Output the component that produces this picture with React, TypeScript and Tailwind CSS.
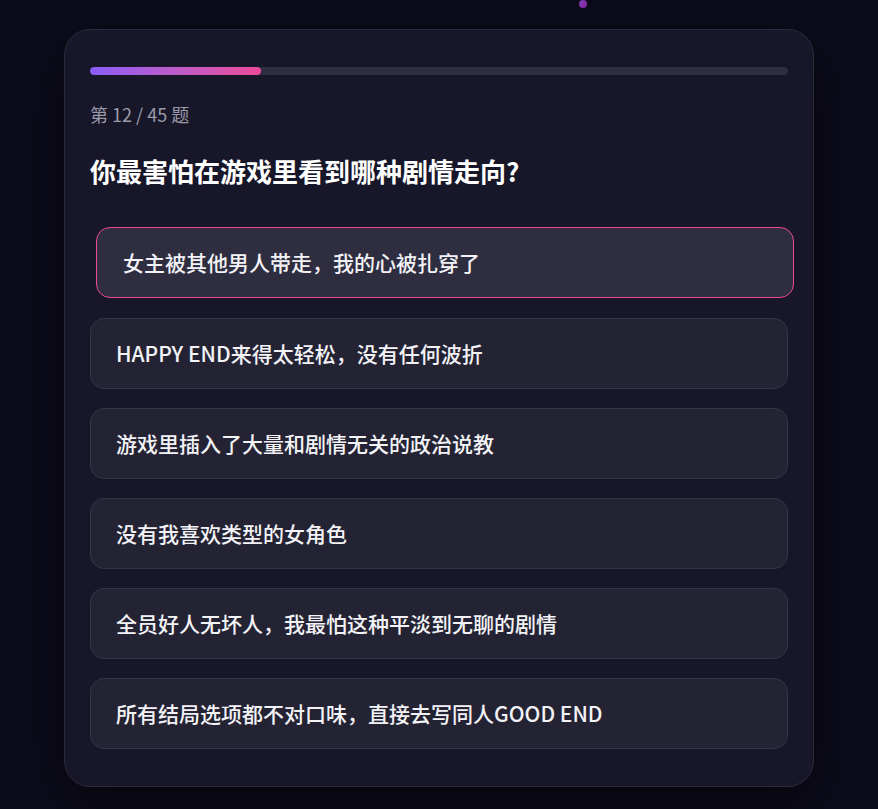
import React from 'react';

const options = [
  '女主被其他男人带走，我的心被扎穿了',
  'HAPPY END来得太轻松，没有任何波折',
  '游戏里插入了大量和剧情无关的政治说教',
  '没有我喜欢类型的女角色',
  '全员好人无坏人，我最怕这种平淡到无聊的剧情',
  '所有结局选项都不对口味，直接去写同人GOOD END',
];

export default function App() {
  const current = 12;
  const total = 45;
  const selected = 0;
  const progress = ((current - 1) / total) * 100;

  return (
    <div
      className="relative min-h-screen w-full overflow-hidden bg-[#0c0b1a] pt-[29px] pb-[22px]"
      style={{ fontFamily: '"Noto Sans CJK SC", "Noto Sans", sans-serif' }}
    >
      {/* floating particle */}
      <div className="absolute left-[579px] top-0 h-[8px] w-[8px] rounded-full bg-gradient-to-br from-[#a855f7] to-[#c026d3] opacity-70" />

      <div className="mx-auto w-[750px] rounded-[26px] border border-[#2a2a3d] bg-[#171729] px-[25px] pt-[37px] pb-[37px] shadow-[0_20px_60px_rgba(0,0,0,0.45)]">
        <div className="h-2 w-full overflow-hidden rounded-full bg-[#2f2e40]">
          <div
            className="h-full rounded-full bg-gradient-to-r from-[#8b5cf6] to-[#ec4899]"
            style={{ width: `${progress}%` }}
          />
        </div>

        <p className="mt-[26px] text-[18px] leading-[27px] text-[#9b9aa9]">
          第 {current} / {total} 题
        </p>

        <h2 className="mt-[25px] text-[26px] font-bold leading-[36px] text-white">
          你最害怕在游戏里看到哪种剧情走向?
        </h2>

        <div className="mt-[39px] flex flex-col gap-[19px]">
          {options.map((opt, i) =>
            i === selected ? (
              <button
                key={i}
                className="w-full translate-x-[6px] -translate-y-px rounded-[14px] border border-[#ec4899] bg-[#2f2e40] px-[26px] py-5 text-left text-[21px] font-medium leading-[29px] text-[#f3f3f7]"
              >
                {opt}
              </button>
            ) : (
              <button
                key={i}
                className="w-full rounded-[14px] border border-[#363547] bg-[#242333] px-[25px] py-5 text-left text-[21px] font-medium leading-[29px] text-[#f3f3f7]"
              >
                {opt}
              </button>
            )
          )}
        </div>
      </div>
    </div>
  );
}
